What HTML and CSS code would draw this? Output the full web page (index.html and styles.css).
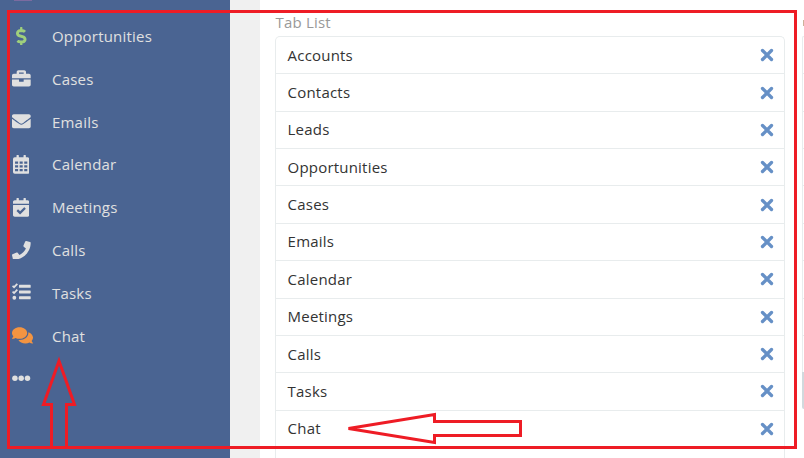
FILE: index.html
```html
<!DOCTYPE html>
<html lang="en">
<head>
<meta charset="utf-8">
<title>Tab List</title>
<link rel="stylesheet" href="styles.css">
</head>
<body>
<div class="app">
  <nav class="sidebar">
    <span class="previous-icon"></span>
    <a class="nav-item"><span class="icon"><svg class="green" viewBox="0 0 288 512"><path d="M209.200 233.400l-108-31.600C88.700 198.200 80 186.500 80 173.500c0-16.300 13.200-29.500 29.500-29.500h66.300c12.200 0 24.200 3.700 34.200 10.500 6.100 4.100 14.300 3.100 19.500-2l34.800-34c7.100-6.900 6.100-18.400-1.800-24.500C238 74.800 207.400 64.100 176 64V16c0-8.800-7.200-16-16-16h-32c-8.800 0-16 7.200-16 16v48h-2.500C45.800 64-5.400 118.700.5 183.600c4.200 46.100 39.400 83.600 83.800 96.600l102.500 30c12.500 3.700 21.200 15.300 21.200 28.300 0 16.300-13.200 29.500-29.500 29.500h-66.300C100 368 88 364.300 78 357.500c-6.100-4.100-14.300-3.100-19.500 2l-34.800 34c-7.100 6.900-6.100 18.400 1.800 24.500 24.500 19.200 55.100 29.900 86.500 30v48c0 8.800 7.200 16 16 16h32c8.800 0 16-7.200 16-16v-48.200c46.600-.9 90.300-28.600 105.700-72.700 21.500-61.600-14.600-124.800-72.500-141.700z"/></svg></span><span>Opportunities</span></a>
    <a class="nav-item"><span class="icon"><svg viewBox="0 0 512 512"><path d="M320 336c0 8.840-7.160 16-16 16h-96c-8.840 0-16-7.160-16-16v-48H0v144c0 25.600 22.400 48 48 48h416c25.600 0 48-22.400 48-48V288H320v48zm144-208h-80V80c0-25.600-22.400-48-48-48H176c-25.600 0-48 22.400-48 48v48H48c-25.600 0-48 22.400-48 48v80h512v-80c0-25.600-22.400-48-48-48zm-144 0H192V96h128v32z"/></svg></span><span>Cases</span></a>
    <a class="nav-item"><span class="icon"><svg viewBox="0 0 512 512"><path d="M502.300 190.800c3.900-3.100 9.700-.2 9.700 4.700V400c0 26.500-21.500 48-48 48H48c-26.500 0-48-21.500-48-48V195.600c0-5 5.700-7.800 9.700-4.700 22.400 17.400 52.100 39.500 154.100 113.600 21.100 15.400 56.700 47.800 92.200 47.600 35.700.3 72-32.800 92.300-47.600 102-74.100 131.600-96.300 154-113.700zM256 320c23.200.4 56.600-29.200 73.400-41.400 132.700-96.300 142.800-104.700 173.400-128.700 5.800-4.500 9.200-11.500 9.200-18.900v-19c0-26.500-21.500-48-48-48H48c-26.500 0-48 21.500-48 48v19c0 7.400 3.400 14.300 9.200 18.900 30.600 23.900 40.700 32.400 173.400 128.700 16.800 12.200 50.200 41.800 73.400 41.400z"/></svg></span><span>Emails</span></a>
    <a class="nav-item"><span class="icon"><svg class="narrow" viewBox="0 0 448 512"><path fill-rule="evenodd" d="M48 64h48V12q0-12 12-12h40q12 0 12 12v52h128V12q0-12 12-12h40q12 0 12 12v52h48q48 0 48 48v352q0 48-48 48H48q-48 0-48-48V112q0-48 48-48zM56 176h84v64H56zm126 0h84v64h-84zm126 0h84v64h-84zM56 280h84v64H56zm126 0h84v64h-84zm126 0h84v64h-84zM56 384h84v64H56zm126 0h84v64h-84zm126 0h84v64h-84z"/></svg></span><span>Calendar</span></a>
    <a class="nav-item"><span class="icon"><svg class="narrow" viewBox="0 0 448 512"><path d="M436 160H12c-6.600 0-12-5.400-12-12v-36c0-26.500 21.500-48 48-48h48V12c0-6.600 5.400-12 12-12h40c6.600 0 12 5.400 12 12v52h128V12c0-6.600 5.400-12 12-12h40c6.600 0 12 5.400 12 12v52h48c26.500 0 48 21.500 48 48v36c0 6.600-5.400 12-12 12zM12 192h424c6.600 0 12 5.400 12 12v260c0 26.500-21.500 48-48 48H48c-26.500 0-48-21.500-48-48V204c0-6.600 5.400-12 12-12zm333.300 95.900l-28.200-28.400c-4.700-4.700-12.300-4.700-17-.1L194 364.600l-46.100-46.500c-4.700-4.700-12.300-4.700-17-.1l-28.400 28.200c-4.700 4.700-4.700 12.300-.1 17l82.600 83.300c4.700 4.700 12.300 4.700 17 .1l143.200-142c4.700-4.700 4.700-12.300.1-16.700z"/></svg></span><span>Meetings</span></a>
    <a class="nav-item"><span class="icon"><svg viewBox="0 0 512 512"><path d="M493.400 24.600l-104-24c-11.300-2.600-22.900 3.300-27.500 13.900l-48 112c-4.200 9.800-1.400 21.300 6.900 28l60.600 49.600c-36 76.700-98.900 140.500-177.200 177.200l-49.600-60.600c-6.800-8.300-18.200-11.100-28-6.900l-112 48C3.900 366.500-2 378.100.6 389.400l24 104C27.100 504.200 36.700 512 48 512c256.100 0 464-207.500 464-464 0-11.200-7.700-20.900-18.600-23.400z"/></svg></span><span>Calls</span></a>
    <a class="nav-item"><span class="icon"><svg viewBox="0 0 512 512"><path d="M208 50h288q16 0 16 16v48q0 16-16 16H208q-16 0-16-16V66q0-16 16-16zm0 156h288q16 0 16 16v48q0 16-16 16H208q-16 0-16-16v-48q0-16 16-16zm0 156h288q16 0 16 16v48q0 16-16 16H208q-16 0-16-16v-48q0-16 16-16z"/><circle cx="64" cy="404" r="52"/><path class="tick" d="M14 78l42 38 90-92M14 236l42 38 90-92"/></svg></span><span>Tasks</span></a>
    <a class="nav-item"><span class="icon"><svg class="orange" viewBox="0 0 576 512"><path d="M416 192c0-88.400-93.100-160-208-160S0 103.600 0 192c0 34.300 14.100 65.900 38 92-13.400 30.200-35.500 54.200-35.800 54.500-2.200 2.300-2.800 5.700-1.500 8.700S4.800 352 8 352c36.600 0 66.900-12.300 88.700-25 32.200 15.700 70.300 25 111.300 25 114.900 0 208-71.600 208-160zm122 220c23.900-26 38-57.700 38-92 0-66.900-53.500-124.200-129.300-148.100.9 6.600 1.300 13.300 1.300 20.100 0 105.900-107.700 192-240 192-10.800 0-21.300-.8-31.700-1.900C207.800 439.600 281.800 480 368 480c41 0 79.100-9.200 111.300-25 21.800 12.700 52.100 25 88.700 25 3.200 0 6.100-1.900 7.300-4.800 1.300-2.900.7-6.300-1.500-8.700-.3-.3-22.400-24.200-35.800-54.500z"/></svg></span><span>Chat</span></a>
    <a class="nav-item"><span class="icon"><svg viewBox="0 0 512 512"><circle cx="80" cy="256" r="75"/><circle cx="252" cy="256" r="75"/><circle cx="424" cy="256" r="75"/></svg></span></a>
  </nav>
  <main class="content">
    <section class="field">
      <div class="label">Tab List</div>
      <ul class="list">
        <li><span>Accounts</span><svg class="remove" viewBox="0 0 14 14"><path d="M2.500 2.500l9 9m0-9l-9 9"/></svg></li>
        <li><span>Contacts</span><svg class="remove" viewBox="0 0 14 14"><path d="M2.500 2.500l9 9m0-9l-9 9"/></svg></li>
        <li><span>Leads</span><svg class="remove" viewBox="0 0 14 14"><path d="M2.500 2.500l9 9m0-9l-9 9"/></svg></li>
        <li><span>Opportunities</span><svg class="remove" viewBox="0 0 14 14"><path d="M2.500 2.500l9 9m0-9l-9 9"/></svg></li>
        <li><span>Cases</span><svg class="remove" viewBox="0 0 14 14"><path d="M2.500 2.500l9 9m0-9l-9 9"/></svg></li>
        <li><span>Emails</span><svg class="remove" viewBox="0 0 14 14"><path d="M2.500 2.500l9 9m0-9l-9 9"/></svg></li>
        <li><span>Calendar</span><svg class="remove" viewBox="0 0 14 14"><path d="M2.500 2.500l9 9m0-9l-9 9"/></svg></li>
        <li><span>Meetings</span><svg class="remove" viewBox="0 0 14 14"><path d="M2.500 2.500l9 9m0-9l-9 9"/></svg></li>
        <li><span>Calls</span><svg class="remove" viewBox="0 0 14 14"><path d="M2.500 2.500l9 9m0-9l-9 9"/></svg></li>
        <li><span>Tasks</span><svg class="remove" viewBox="0 0 14 14"><path d="M2.500 2.500l9 9m0-9l-9 9"/></svg></li>
        <li><span>Chat</span><svg class="remove" viewBox="0 0 14 14"><path d="M2.500 2.500l9 9m0-9l-9 9"/></svg></li>
        <li class="last"></li>
      </ul>
    </section>
    <section class="next">
      <div class="next-label"></div>
      <ul class="list next-list">
        <li></li><li></li><li></li><li></li><li></li><li></li><li></li><li></li><li></li>
      </ul>
      <div class="next-button"></div>
    </section>
  </main>
</div>
<svg class="annotations" viewBox="0 0 804 458">
  <rect x="8.500" y="11.500" width="787" height="436"/>
  <path d="M59 361L74.500 404.500H66.500V447.500H51.500V404.500H43.500Z"/>
  <path d="M348.500 428.500L434.500 414.500V421.500H520.500V435.500H434.500V442.500Z"/>
</svg>
</body>
</html>
```
FILE: styles.css
```css
* { box-sizing: border-box; }
body {
  margin: 0;
  width: 804px;
  height: 458px;
  overflow: hidden;
  font: 15px/21px "Open Sans", sans-serif;
  letter-spacing: 0.2px;
  color: #333;
  background: #f0f0f0;
}
.app { display: flex; height: 458px; overflow: hidden; }
.sidebar {
  width: 230px;
  flex: none;
  padding-left: 12px;
  background: #4a6492;
  color: #e0e0e0;
}
.previous-icon {
  display: block;
  width: 18px;
  height: 1px;
  margin: 0 0 14px 2px;
  background: #7b6ba0;
}
.nav-item {
  display: flex;
  align-items: center;
  height: 42.820px;
}
.icon {
  display: flex;
  align-items: center;
  width: 40px;
  padding-bottom: 1px;
}
.icon svg { height: 18.700px; fill: #e0e0e0; }
.icon .narrow { margin-left: 1px; }
.icon .green { fill: #9fd07c; margin-left: 4px; }
.icon .orange { fill: #f39441; }
.icon .tick { fill: none; stroke: #e0e0e0; stroke-width: 48; }
.content {
  flex: none;
  display: flex;
  width: 544px;
  height: 458px;
  margin-left: 30px;
  padding: 12px 0 0 15px;
  overflow: hidden;
  background: #fff;
}
.field { flex: none; width: 510px; }
.label { height: 24px; padding-left: 0.500px; color: #999; }
.list {
  margin: 0;
  padding: 0;
  list-style: none;
  border: 1px solid #e8eced;
  border-radius: 5px;
}
.list li {
  display: flex;
  align-items: center;
  justify-content: space-between;
  height: 37.370px;
  padding: 0 10px 0 11.600px;
  border-top: 1px solid #e8eced;
}
.list li:first-child { height: 36.370px; border-top: 0; }
.list .last { height: 11px; }
.list:has(.last) { border-bottom: 0; border-radius: 5px 5px 0 0; }
.remove { width: 14px; height: 14px; }
.remove path { stroke: #6690c6; stroke-width: 3.300; stroke-linecap: round; }
.next { flex: none; width: 2px; margin-left: 17px; overflow: hidden; }
.next-label {
  width: 1px;
  height: 6px;
  margin: 8px 0 10px 1px;
  background: #cdb19a;
}
.next-list {
  width: 2px;
  border-width: 1px 0 0 1px;
  border-radius: 2px 0 0 0;
}
.next-list li { padding: 0; }
.next-button { height: 37px; background: #d1d9dd; border-radius: 0 0 0 2px; }
.annotations {
  position: absolute;
  top: 0;
  left: 0;
  width: 804px;
  height: 458px;
  fill: none;
  stroke: #ee1c25;
  stroke-width: 3;
}
```
